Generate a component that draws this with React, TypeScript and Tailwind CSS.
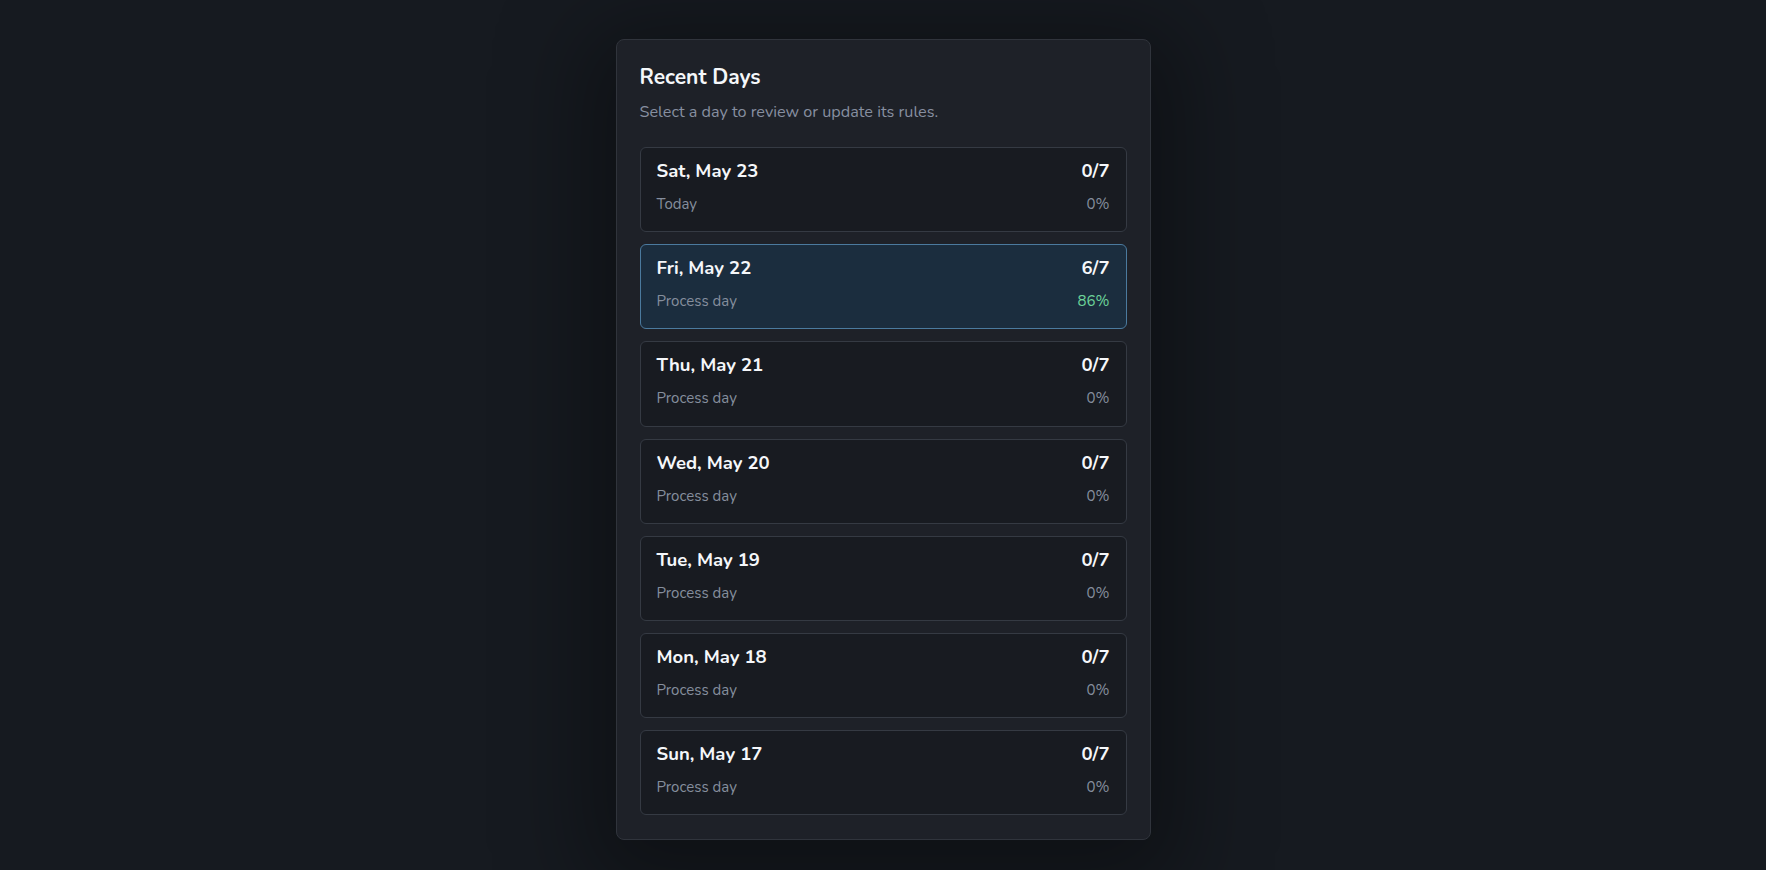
const days = [
  { label: "Sat, May 23", note: "Today", score: "0/7", pct: "0%", active: false },
  { label: "Fri, May 22", note: "Process day", score: "6/7", pct: "86%", active: true },
  { label: "Thu, May 21", note: "Process day", score: "0/7", pct: "0%", active: false },
  { label: "Wed, May 20", note: "Process day", score: "0/7", pct: "0%", active: false },
  { label: "Tue, May 19", note: "Process day", score: "0/7", pct: "0%", active: false },
  { label: "Mon, May 18", note: "Process day", score: "0/7", pct: "0%", active: false },
  { label: "Sun, May 17", note: "Process day", score: "0/7", pct: "0%", active: false },
]

function DayRow({ day }: { day: (typeof days)[number] }) {
  return (
    <button
      type="button"
      className={
        day.active
          ? "w-full rounded-md border border-[#4b7a9e] bg-[#1b2d3e] pl-4 pr-4 pt-[11px] pb-[17.2px] text-left"
          : "w-full rounded-md border border-[#353a43] bg-[#181b21] pl-4 pr-4 pt-[11px] pb-[17.2px] text-left"
      }
    >
      <div className="flex items-center justify-between text-[18.5px] leading-[24px] font-bold text-[#f5f7fa]">
        <span>{day.label}</span>
        <span>{day.score}</span>
      </div>
      <div className="mt-[11px] flex items-center justify-between text-[15px] leading-[20px]">
        <span className="text-[#858e9d]">{day.note}</span>
        <span className={day.active ? "text-[#6dd49a]" : "text-[#858e9d]"}>{day.pct}</span>
      </div>
    </button>
  )
}

export default function App() {
  return (
    <div
      className="min-h-screen bg-[#161a20] flex justify-center pt-[39px]"
      style={{ fontFamily: '"Nunito", "Lato", "Noto Sans", sans-serif' }}
    >
      <div className="h-fit w-[535px] rounded-lg border border-[#30343c] bg-[#1e2128] px-[23px] pt-[23px] pb-[24px] shadow-[0_20px_90px_30px_rgba(0,0,0,0.35)]">
        <h2 className="text-[21px] leading-[28px] font-bold text-[#f5f7fa]">Recent Days</h2>
        <p className="mt-[10px] text-[16.2px] leading-[22px] text-[#878fa0]">
          Select a day to review or update its rules.
        </p>
        <div className="mt-[24px] flex flex-col gap-3">
          {days.map((d) => (
            <DayRow key={d.label} day={d} />
          ))}
        </div>
      </div>
    </div>
  )
}
